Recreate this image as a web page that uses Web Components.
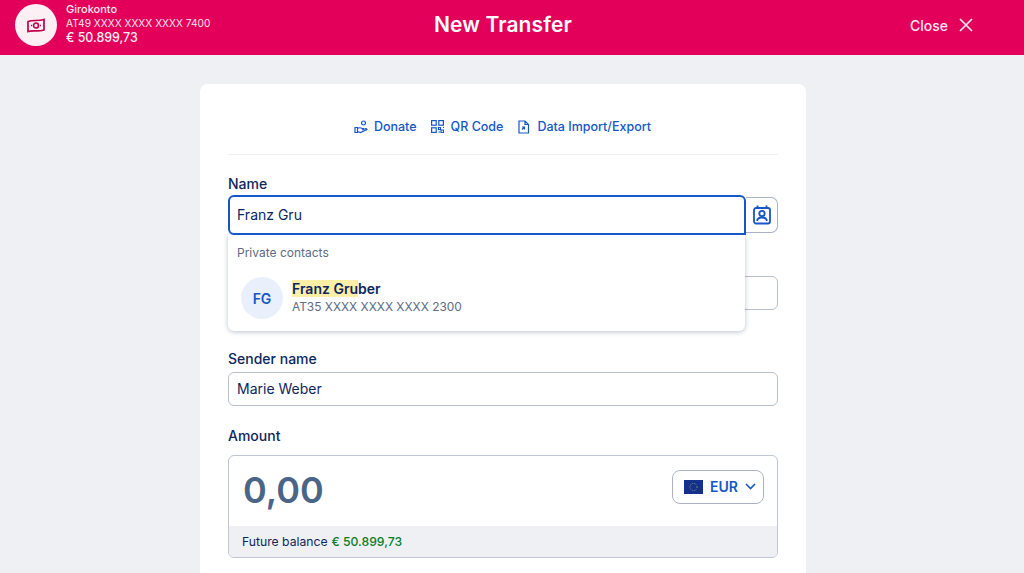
<!DOCTYPE html>
<html><head><meta charset="utf-8"><style>
html,body{margin:0;height:573px;overflow:hidden;background:#eef0f4;font-family:Inter,"Liberation Sans",sans-serif;color:#0e2660}
</style></head><body>
<bank-app></bank-app>
<script>
const def=(n,css,html)=>customElements.define(n,class extends HTMLElement{constructor(){super();this.attachShadow({mode:'open'}).innerHTML=`<style>${css}</style>${html}`}});
const blue='#1457c8';
def('top-bar',`:host{display:flex;align-items:center;justify-content:space-between;height:55px;background:#e2005a;color:#fff;padding:0 51px 5px 15px;box-sizing:border-box;position:relative}
.acc{display:flex;align-items:center;gap:9px}.av{width:42px;height:42px;border-radius:50%;background:#fdf0f5;display:flex;align-items:center;justify-content:center}
.t{font-size:10.2px;line-height:14px;color:#ffe4ee;margin-top:-3px}.t b{display:block;font-weight:500;font-size:11px}.t .m{display:block;font-size:12.4px;font-weight:550;line-height:15px;color:#ffeef4}
h1{position:absolute;left:0;width:1006px;top:12px;margin:0;line-height:26px;text-align:center;font-size:21px;font-weight:600;pointer-events:none;letter-spacing:.1px}
.c{display:flex;align-items:center;gap:11px;font-size:14px;font-weight:500;color:#ffe9f1}`,
`<div class="acc"><div class="av"><svg width="18" height="15" viewBox="0 0 18 15" fill="none" stroke="#c0004c" stroke-width="1.7"><path d="M1 3.500c5-2 10 0 16-2v10.500c-6 2-11 0-16 1.500z"/><circle cx="9" cy="7.500" r="2.500"/><path d="M4 7.500h1M13 7.500h1"/></svg></div>
<div class="t"><b>Girokonto</b>AT49 XXXX XXXX XXXX 7400<span class="m">€ 50.899,73</span></div></div>
<h1>New Transfer</h1>
<div class="c">Close <svg width="14" height="14" viewBox="0 0 14 14" stroke="#ffe9f1" stroke-width="1.700" fill="none"><path d="M1 1l12 12M13 1L1 13"/></svg></div>`);
def('action-link',`:host{display:inline-flex;align-items:center;gap:7px;color:${blue};font-size:12.5px;font-weight:550}`,`<slot name="i"></slot><slot></slot>`);
def('field-label',`:host{display:block;font-size:14px;font-weight:550;line-height:17px;color:#0e2660}`,`<slot></slot>`);
def('text-box',`:host{display:flex;align-items:center;height:34px;box-sizing:border-box;border:1px solid #b8c0ce;border-radius:6px;background:#fff;padding:0 8px 1px;font-size:14px;color:#0e2660}`,`<slot></slot>`);
def('contact-menu',`:host{display:block;position:absolute;left:0;top:60px;width:517px;height:96px;box-sizing:border-box;background:#fff;border-radius:0 0 6px 6px;box-shadow:0 1px 5px rgba(20,35,80,.28);padding:10px 9px;z-index:2}
.h{font-size:12px;line-height:15px;color:#5c6c88}.r{display:flex;align-items:center;gap:9px;margin:17px 0 0 4px}
.a{width:42px;height:42px;border-radius:50%;background:#e9effb;color:${blue};font-size:14px;font-weight:600;display:flex;align-items:center;justify-content:center}
.n{font-size:14px;font-weight:600;line-height:16px;color:#0e2660}mark{background:#fdf0a6;color:inherit}.i{font-size:11.9px;line-height:18px;margin-top:1px;color:#5c6c88}`,
`<div class="h">Private contacts</div><div class="r"><div class="a">FG</div><div><div class="n"><mark>Franz Gru</mark>ber</div><div class="i">AT35 XXXX XXXX XXXX 2300</div></div></div>`);
def('amount-box',`:host{display:block;height:103px;box-sizing:border-box;border:1px solid #c0c6d2;border-radius:6px;overflow:hidden;background:#fff}
.m{height:70px;display:flex;align-items:center;justify-content:space-between;padding:0 13px 0 14px}
.v{font-size:36px;font-weight:600;color:#4a6587;margin-top:-2px}
.p{display:flex;align-items:center;gap:7px;width:92px;height:34px;box-sizing:border-box;padding-left:11px;border:1.500px solid #aab3c4;border-radius:8px;font-size:14px;font-weight:600;color:${blue};margin-top:-9px}
.f{height:32px;box-sizing:border-box;padding:0 13px 2px;background:#eef0f4;display:flex;align-items:center;font-size:12.2px;color:#0e2660;gap:4px}.f b{font-weight:550;color:#0a7d24}`,
`<div class="m"><div class="v">0,00</div><div class="p"><svg width="19" height="14" viewBox="0 0 19 14"><rect width="19" height="14" fill="#12308c"/><circle cx="9.500" cy="7" r="3.600" fill="none" stroke="#c9b84a" stroke-width=".7" stroke-dasharray="1 1.100"/></svg>EUR<svg width="11" height="7" viewBox="0 0 11 7" fill="none" stroke="${blue}" stroke-width="1.600"><path d="M1 1l4.500 4.500L10 1"/></svg></div></div>
<div class="f">Future balance <b>€ 50.899,73</b></div>`);
def('transfer-card',`:host{display:block;width:606px;height:489px;margin:29px 0 0 200px;background:#fff;border-radius:8px 8px 0 0;box-sizing:border-box;padding:0 28px;overflow:hidden}
.acts{display:flex;justify-content:center;gap:14px;height:71px;align-items:flex-end;padding-bottom:20px;box-sizing:border-box;border-bottom:1px solid #eef0f4;padding-right:1px}
.f{position:relative}.row{display:flex;align-items:center;margin-top:3px}.in{width:518px;height:40px;box-sizing:border-box;border:2px solid ${blue};border-radius:6px 6px 0 6px;background:#fff;padding:0 7px 1px;font-size:14px;display:flex;align-items:center;position:relative;z-index:3}
.btn{width:32px;height:36px;margin-top:-1px;box-sizing:border-box;border:1px solid #aab3c4;border-left:0;border-radius:0 7px 7px 0;display:flex;align-items:center;justify-content:center}`,
`<div class="acts"><action-link style="gap:6px"><svg slot="i" width="14" height="14" viewBox="0 0 14 14" fill="none" stroke="${blue}" stroke-width="1.200"><circle cx="9.500" cy="3" r="2"/><path d="M1 7.500h2.500v5H1zM3.500 8.500c2-1.500 3-1 5 0h1.500M3.500 11.500l3 1 6.500-3c-.5-1-1.500-1-2.500-.5l-2.500 1"/></svg>Donate</action-link>
<action-link><svg slot="i" width="13" height="13" viewBox="0 0 13 13" fill="none" stroke="${blue}" stroke-width="1.200"><rect x=".6" y=".6" width="4.600" height="4.600"/><rect x="7.800" y=".6" width="4.600" height="4.600"/><rect x=".6" y="7.800" width="4.600" height="4.600"/><path d="M7.500 7.500h2v2h-2zM10 10h2.500v2.500H10zM12 7.500h1M7.500 12h1.500"/></svg>QR Code</action-link>
<action-link><svg slot="i" width="13" height="14" viewBox="0 0 13 14" fill="none" stroke="${blue}" stroke-width="1.200"><path d="M2 1h6l3.500 3.500V13H2zM8 1v3.500h3.500M5 9.500l2.500-2.500M5 7h2.500v2.500"/></svg>Data Import/Export</action-link></div>
<div class="f" style="margin-top:20px"><field-label>Name</field-label>
<div class="row"><div class="in">Franz Gru</div><div class="btn"><svg width="18" height="20" viewBox="0 0 18 20" fill="none" stroke="${blue}" stroke-width="1.800"><rect x="1" y="3" width="16" height="15.500" rx="2"/><path d="M4.500 .5v3M13.500 .5v3"/><circle cx="9" cy="8.500" r="2.700"/><path d="M4 16c.5-3 2.500-3.500 5-3.500s4.500.5 5 3.500"/></svg></div></div>
<contact-menu></contact-menu></div>
<div style="margin-top:41px"><text-box></text-box></div>
<div style="margin-top:40px"><field-label>Sender name</field-label><text-box style="margin-top:5px">Marie Weber</text-box></div>
<div style="margin-top:21px"><field-label>Amount</field-label><amount-box style="margin-top:11px"></amount-box></div>`);
def('bank-app',`:host{display:block}`,`<top-bar></top-bar><transfer-card></transfer-card>`);
</script></body></html>
